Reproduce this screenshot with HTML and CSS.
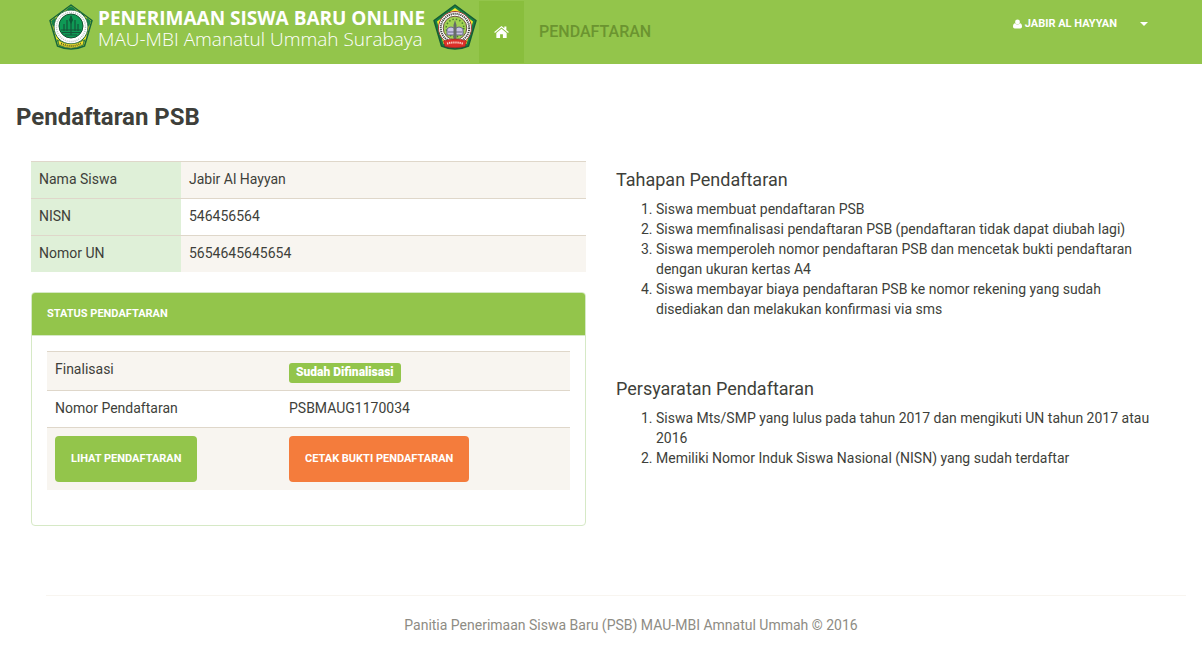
FILE: index.html
```html
<!DOCTYPE html>
<html lang="id">
<head>
<meta charset="utf-8">
<meta name="viewport" content="width=device-width, initial-scale=1">
<title>Pendaftaran PSB</title>
<link rel="stylesheet" href="styles.css">
</head>
<body>
<header class="navbar">
  <a class="brand" href="#">
    <svg class="emblem" viewBox="0 0 44 46" aria-hidden="true">
      <path d="M22 1 L43 16.500 L35.500 42 Q22 48 8.500 42 L1 16.500 Z" fill="#f5e52a" stroke="#17663a" stroke-width="1.500" stroke-linejoin="round"/>
      <path d="M22 2 L27 5.500 L22 8 L17 5.500 Z M42 17 L40 23 L37 19 L37.500 13.500 Z M2 17 L4 23 L7 19 L6.500 13.500 Z M34.500 41.500 L28 44 L31 38 L36.500 35 Z M9.500 41.500 L16 44 L13 38 L7.500 35 Z" fill="#16834a"/>
      <circle cx="22" cy="23" r="17" fill="#fff" stroke="#17663a"/>
      <circle cx="22" cy="23" r="14.500" fill="none" stroke="#b9c4bd" stroke-width="1.500" stroke-dasharray="1 1"/>
      <circle cx="22" cy="22" r="12" fill="#0e9a55" stroke="#12512f"/>
      <path d="M12 26 H32 M13 28.500 H31 M16 31 H28 M22 12 V31 M18 16 V27 M26 16 V27 M15 20 V27 M29 20 V27" fill="none" stroke="#14573a" stroke-width="1.200"/>
      <path d="M22 11 L24 16 L22 20 L20 16 Z" fill="#0b5836"/>
      <path d="M9 36 Q22 44 35 36 L34 41 Q22 47 10 41 Z" fill="#f5e52a" stroke="#42733a" stroke-width=".7"/>
      <path d="M12 39.500 Q22 44.500 32 39.500" fill="none" stroke="#4c512a" stroke-width="2" stroke-dasharray="1 1"/>
    </svg>
    <span class="brand-text">
      <strong class="brand-title">PENERIMAAN SISWA BARU ONLINE</strong>
      <span class="brand-sub">MAU-MBI Amanatul Ummah Surabaya</span>
    </span>
    <svg class="emblem" viewBox="0 0 44 46" aria-hidden="true">
      <path d="M22 1 L43 16.500 L35.500 42 Q22 48 8.500 42 L1 16.500 Z" fill="#168044" stroke="#165b35" stroke-width="1.500" stroke-linejoin="round"/>
      <path d="M22 4 L40 17.500 L33.500 40 H10.500 L4 17.500 Z" fill="#f7e72b"/>
      <circle cx="22" cy="24" r="16.500" fill="#fff" stroke="#a23a36"/>
      <circle cx="22" cy="24" r="14.200" fill="none" stroke="#45453f" stroke-width="2" stroke-dasharray="1.200 .8"/>
      <circle cx="22" cy="24" r="11.800" fill="#a2d254" stroke="#6d5146"/>
      <circle cx="22" cy="24" r="8.800" fill="none" stroke="#47812d" stroke-width="1.500" stroke-dasharray="1.500 2"/>
      <path d="M14 25 Q18 21 22 25 Q26 21 30 25 V31 H14 Z" fill="#c9c5e4" stroke="#686589"/>
      <path d="M15 28 H29" stroke="#686589"/>
      <path d="M20.500 35 V21 L22 16 L23.500 21 V35 Z" fill="#666d68"/>
      <path d="M10.500 37 Q22 33 33.500 37 L32 42.500 Q22 45 12 42.500 Z" fill="#dc3029" stroke="#9b2420" stroke-width=".6"/>
      <path d="M14 39.500 Q22 37.500 30 39.500" fill="none" stroke="#fbd5c8" stroke-width="2" stroke-dasharray="1.300 .8"/>
    </svg>
  </a>
  <nav class="menu">
    <a class="menu-link active" href="#" aria-label="Beranda">
      <svg class="home" viewBox="0 0 16 14" aria-hidden="true"><path d="M8 3.500 L13.500 8 V13 Q13.500 13.500 13 13.500 H9.500 V9.500 H6.500 V13.500 H3 Q2.500 13.500 2.500 13 V8 Z M8 .5 L11 3 V1 H13.200 V4.800 L15.800 7 L15 8 L8 2.200 L1 8 L.2 7 Z"/></svg>
    </a>
    <a class="menu-link" href="#">PENDAFTARAN</a>
  </nav>
  <button class="user" type="button">
    <svg class="person" viewBox="0 0 10 10" aria-hidden="true"><circle cx="5" cy="2.700" r="2.700"/><path d="M2.300 4.300 Q5 7 7.700 4.300 Q10 4.600 10 8 Q10 10 8 10 H2 Q0 10 0 8 Q0 4.600 2.300 4.300 Z"/></svg>
    <span>JABIR AL HAYYAN</span>
    <span class="caret"></span>
  </button>
</header>

<main class="page">
  <h1 class="title">Pendaftaran PSB</h1>
  <div class="columns">
    <section class="column">
      <table class="table identity">
        <tr><th scope="row">Nama Siswa</th><td>Jabir Al Hayyan</td></tr>
        <tr><th scope="row">NISN</th><td>546456564</td></tr>
        <tr><th scope="row">Nomor UN</th><td>5654645645654</td></tr>
      </table>
      <div class="panel">
        <h2 class="panel-heading">STATUS PENDAFTARAN</h2>
        <div class="panel-body">
          <table class="table status">
            <tr><th scope="row">Finalisasi</th><td class="badge-cell"><span class="badge">Sudah Difinalisasi</span></td></tr>
            <tr><th scope="row">Nomor Pendaftaran</th><td>PSBMAUG1170034</td></tr>
            <tr><td class="action-cell"><button class="btn" type="button">LIHAT PENDAFTARAN</button></td><td class="action-cell"><button class="btn btn-print" type="button">CETAK BUKTI PENDAFTARAN</button></td></tr>
          </table>
        </div>
      </div>
    </section>
    <section class="column info">
      <div>
        <h2 class="subtitle">Tahapan Pendaftaran</h2>
        <ol class="steps">
          <li>Siswa membuat pendaftaran PSB</li>
          <li>Siswa memfinalisasi pendaftaran PSB (pendaftaran tidak dapat diubah lagi)</li>
          <li>Siswa memperoleh nomor pendaftaran PSB dan mencetak bukti pendaftaran dengan ukuran kertas A4</li>
          <li>Siswa membayar biaya pendaftaran PSB ke nomor rekening yang sudah disediakan dan melakukan konfirmasi via sms</li>
        </ol>
      </div>
      <div>
        <h2 class="subtitle">Persyaratan Pendaftaran</h2>
        <ol class="steps">
          <li>Siswa Mts/SMP yang lulus pada tahun 2017 dan mengikuti UN tahun 2017 atau 2016</li>
          <li>Memiliki Nomor Induk Siswa Nasional (NISN) yang sudah terdaftar</li>
        </ol>
      </div>
    </section>
  </div>
  <footer class="footer">Panitia Penerimaan Siswa Baru (PSB) MAU-MBI Amnatul Ummah © 2016</footer>
</main>
</body>
</html>
```
FILE: styles.css
```css
* { box-sizing: border-box; }
body {
  margin: 0;
  background: #fff;
  color: #3e3f3a;
  font-family: Roboto, "Liberation Sans", sans-serif;
  font-size: 14px;
  line-height: 20px;
}
button { font-family: inherit; border: 0; cursor: pointer; }

.navbar {
  display: flex;
  align-items: flex-start;
  height: 64px;
  padding: 1px 54px 1px 49px;
  background: #93c54b;
}
.brand {
  display: flex;
  gap: 5px;
  padding: 3px 2px 0 0;
  color: #fff;
  text-decoration: none;
  white-space: nowrap;
}
.emblem { flex: none; width: 44px; height: 46px; }
.brand-text {
  display: flex;
  flex-direction: column;
  padding: 4px 3px 0 0;
  font-family: "Open Sans", "Noto Sans", sans-serif;
  font-size: 19px;
  line-height: 21px;
}
.brand-title { font-weight: 700; }
.brand-sub { font-weight: 300; }
.menu { display: flex; align-self: stretch; }
.menu-link {
  display: flex;
  align-items: center;
  padding: 0 15px;
  color: #6b9430;
  font-size: 16px;
  font-weight: 500;
  text-decoration: none;
}
.menu-link.active { background: #89be3d; }
.home { width: 15px; height: 14px; fill: #fff; }
.user {
  display: flex;
  align-items: center;
  gap: 3px;
  margin-left: auto;
  padding: 13px 0;
  background: transparent;
  color: #fff;
  font-size: 11px;
  font-weight: 700;
  line-height: 20px;
}
.person { width: 9px; height: 10px; fill: #fff; }
.caret {
  margin-left: 20px;
  border: 4px solid transparent;
  border-top-color: #fff;
  border-bottom: 0;
}

.page { padding: 38px 16px 0; }
.title { margin: 0; font-size: 24px; font-weight: 700; line-height: 30px; }
.columns { display: grid; grid-template-columns: 1fr 1fr; gap: 30px; padding: 29px 15px 0; }

.table { width: 100%; border-collapse: separate; border-spacing: 0; table-layout: fixed; }
.table th, .table td {
  padding: 7px 8px 9px;
  border-top: 1px solid #dfd7ca;
  font-weight: 400;
  text-align: left;
  vertical-align: top;
}
.table tr:nth-child(odd) { background: #f8f5f0; }
.identity th { width: 150px; background: #dff0d8; }
.status th { width: 234px; }

.panel { margin-top: 20px; border: 1px solid #d6e9c6; border-radius: 4px; overflow: hidden; }
.panel-heading {
  margin: 0;
  padding: 11px 15px;
  border-bottom: 1px solid #d6e9c6;
  background: #93c54b;
  color: #fff;
  font-size: 11px;
  font-weight: 700;
  line-height: 20px;
}
.panel-body { padding: 15px 15px 35px; }
.table .badge-cell { padding: 11px 8px 7px; }
.table .action-cell { padding: 8px; }
.badge {
  display: block;
  width: fit-content;
  padding: 0 7px 2px;
  border-radius: 3px;
  background: #93c54b;
  color: #fff;
  font-size: 12px;
  font-weight: 900;
  line-height: 18px;
}
.btn {
  display: block;
  padding: 13px 16px;
  border-radius: 4px;
  background: #93c54b;
  color: #fff;
  font-size: 11px;
  font-weight: 700;
  line-height: 20px;
}
.btn-print { background: #f47c3c; }

.info { display: flex; flex-direction: column; gap: 60px; padding-top: 9px; }
.subtitle { margin: 0 0 9px; font-size: 18px; font-weight: 400; line-height: 20px; }
.steps { margin: 0; padding-left: 40px; }

.footer {
  margin: 69px 0 0 30px;
  padding: 19px 0 12px 30px;
  border-top: 1px solid #f8f5f0;
  color: #8e8c84;
  text-align: center;
}
```
